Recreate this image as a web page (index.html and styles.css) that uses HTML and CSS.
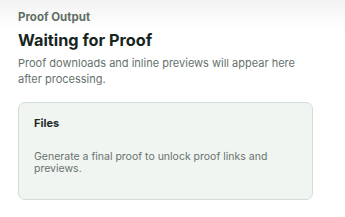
FILE: index.html
```html
<!DOCTYPE html>
<html lang="en">
<head>
  <meta charset="UTF-8">
  <title>Proof Output</title>
  <link rel="stylesheet" href="styles.css">
</head>
<body>
<section class="panel">
  <div class="eyebrow">Proof Output</div>
  <h2 class="title">Waiting for Proof</h2>
  <p class="lead">Proof downloads and inline previews will appear here after processing.</p>

  <div class="card">
    <h3 class="card-title">Files</h3>
    <p class="card-text">Generate a final proof to unlock proof links and previews.</p>
  </div>
</section>
</body>
</html>
```

FILE: styles.css
```css
body {
  margin: 0;
  font-family: Inter, "Noto Sans", sans-serif;
  background: linear-gradient(#f2f3f2, #ffffff 30px);
  min-height: 217px;
}
.panel {
  padding: 9px 18px 16px;
}
.eyebrow {
  font-size: 11.5px;
  font-weight: 700;
  color: #5f6e66;
  line-height: 16px;
}
.title {
  margin: 5px 0 0;
  font-size: 16.3px;
  font-weight: 700;
  color: #17261f;
  line-height: 20px;
}
.lead {
  margin: 5px 0 0;
  font-size: 11px;
  color: #66716c;
  line-height: 16px;
  max-width: 290px;
}
.card {
  margin-top: 15px;
  width: 263px;
  padding: 13px 15px 24px;
  background-color: #f0f5f2;
  border: 1px solid #d3ddd7;
  border-radius: 7px;
}
.card-title {
  margin: 0;
  font-size: 11px;
  font-weight: 700;
  color: #1d2a24;
  line-height: 14px;
}
.card-text {
  margin: 21px 0 0;
  font-size: 10.5px;
  color: #69736e;
  line-height: 12px;
}
```
